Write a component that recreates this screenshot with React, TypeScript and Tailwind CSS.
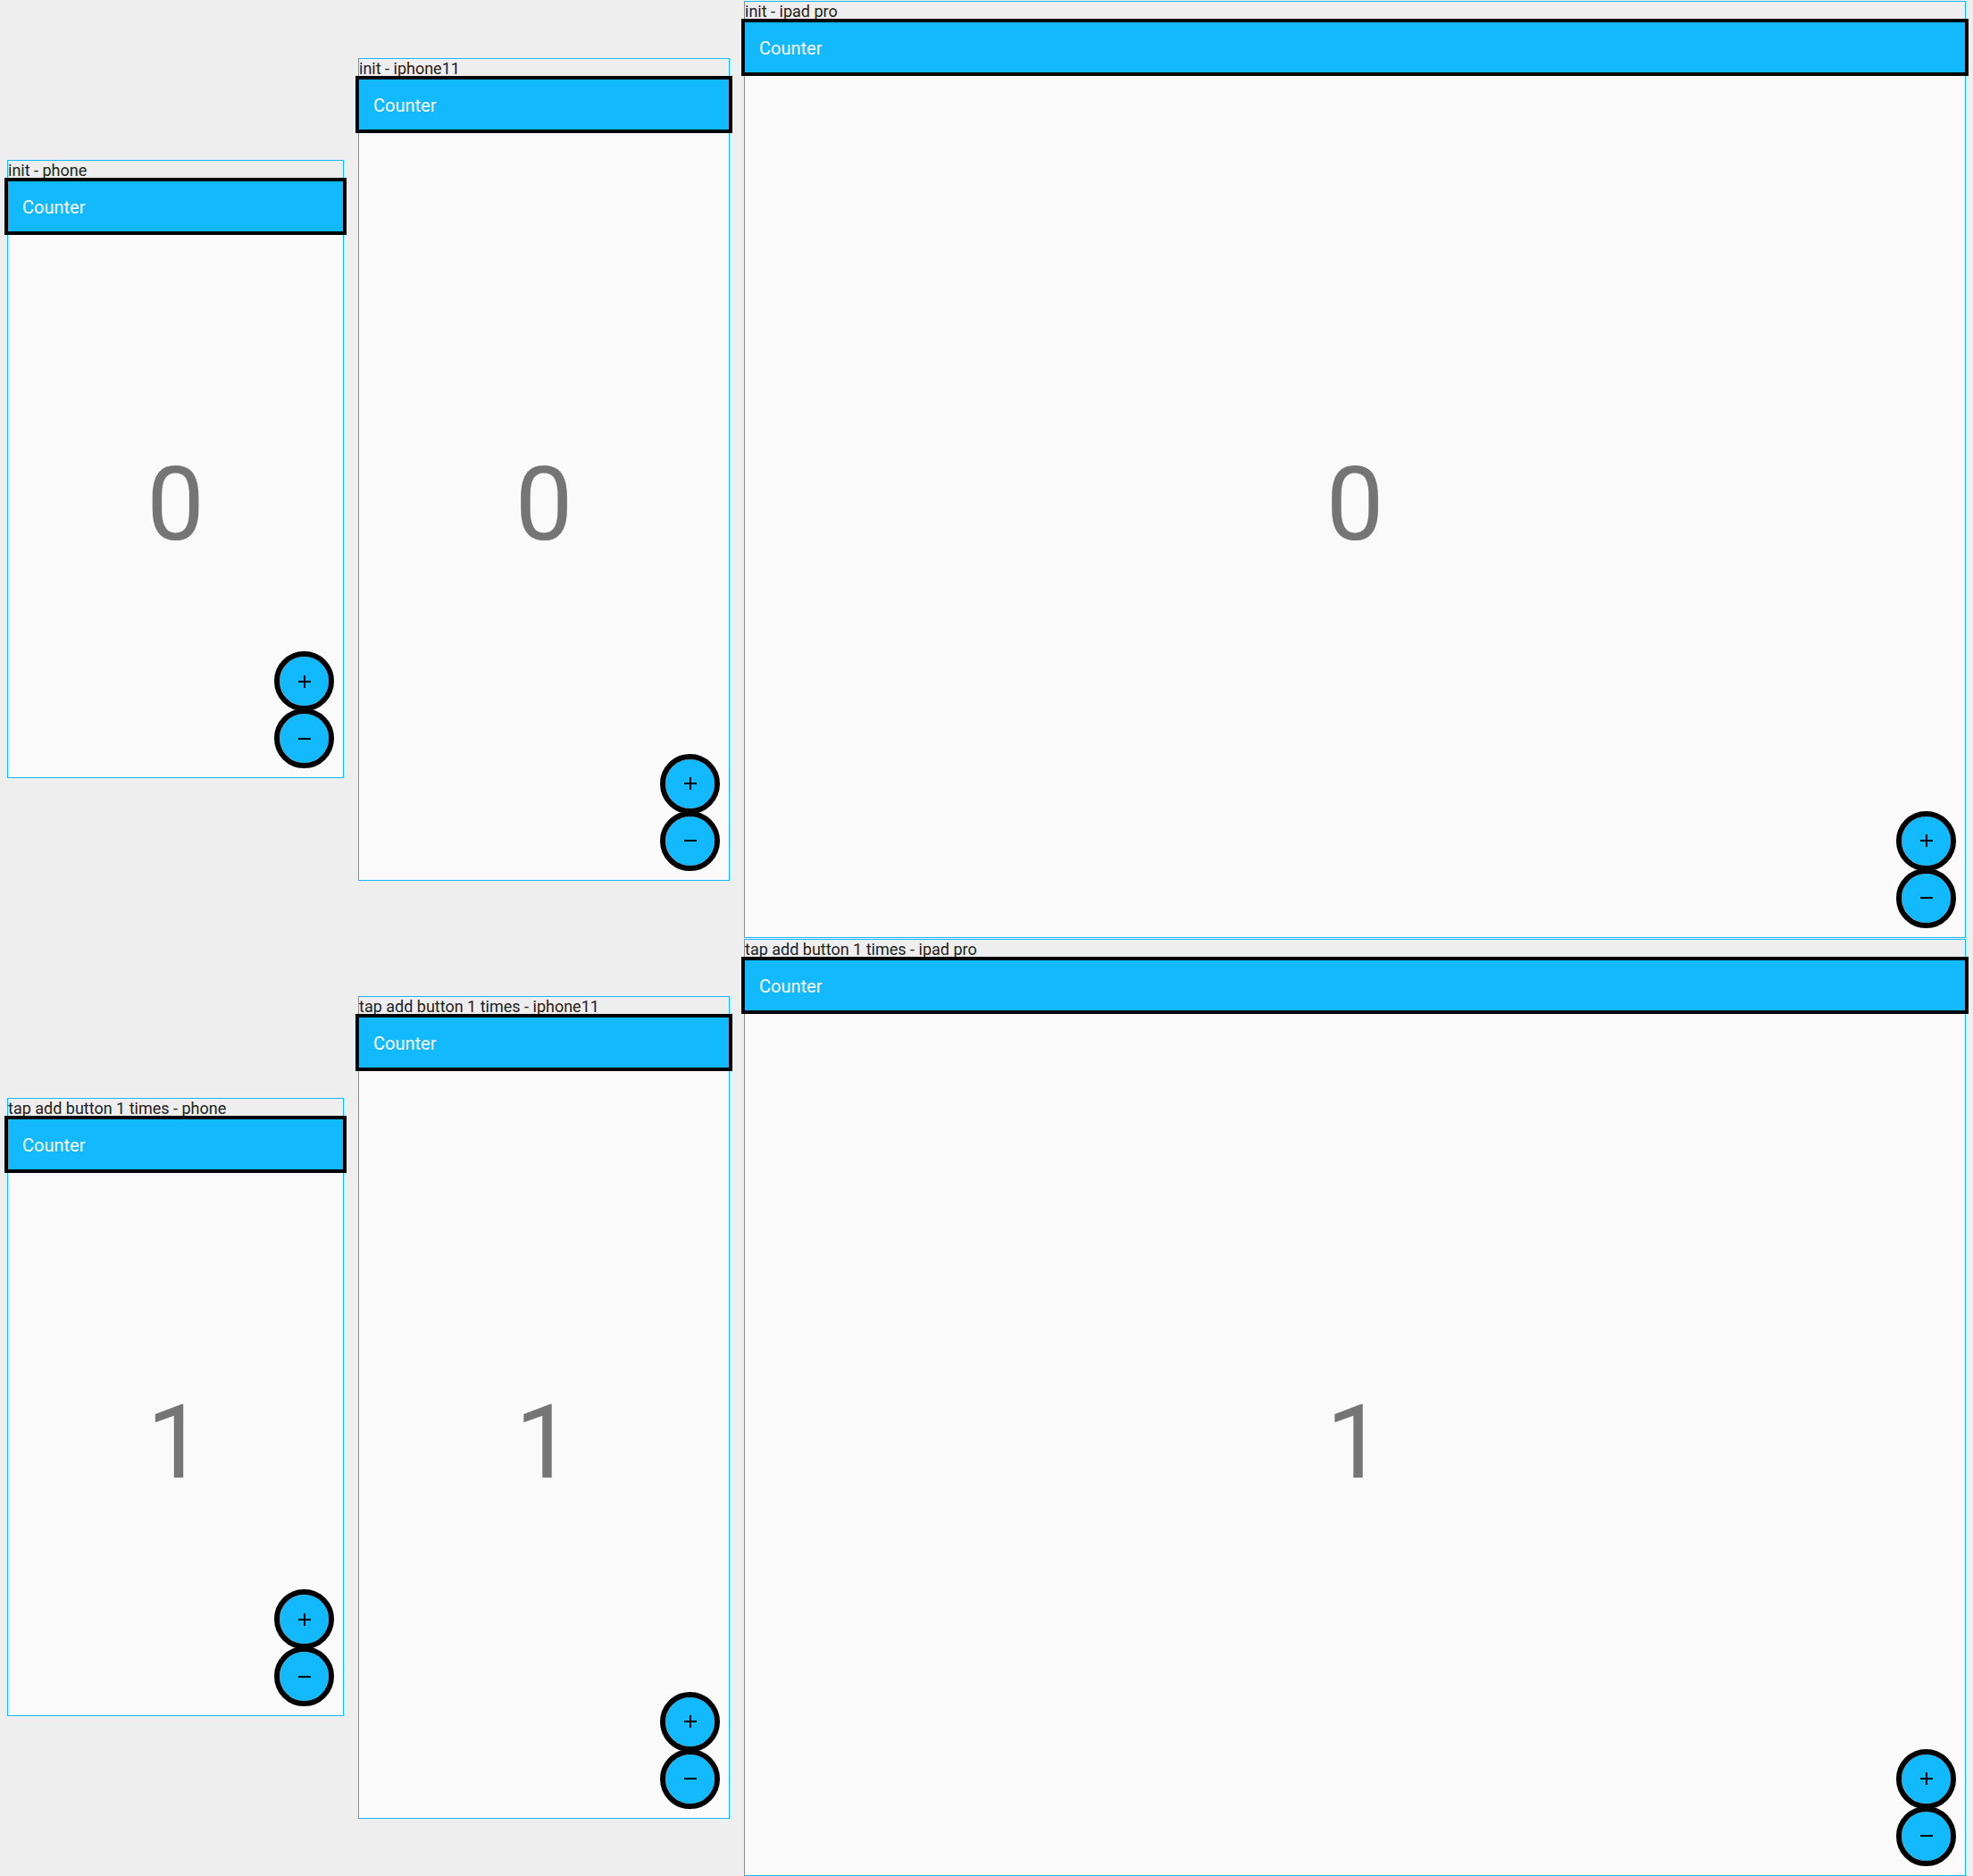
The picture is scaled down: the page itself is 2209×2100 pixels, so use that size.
import React from "react"

// Golden test grid: counter app on three devices, before and after a tap
const devices = [
  { id: "phone", name: "phone", w: "w-[375px]", h: "h-[667px]" },
  { id: "iphone11", name: "iphone11", w: "w-[414px]", h: "h-[896px]" },
  { id: "ipad", name: "ipad pro", w: "w-[1366px]", h: "h-[1024px]" },
]

const scenarios = [
  { id: "init", label: "init", count: 0 },
  { id: "tap", label: "tap add button 1 times", count: 1 },
]

const font = { fontFamily: "Roboto, 'Liberation Sans', sans-serif" }

function PlusIcon() {
  return (
    <svg viewBox="0 0 24 24" className="h-6 w-6" fill="#000">
      <path d="M19 13h-6v6h-2v-6H5v-2h6V5h2v6h6v2z" />
    </svg>
  )
}

function MinusIcon() {
  return (
    <svg viewBox="0 0 24 24" className="h-6 w-6" fill="#000">
      <path d="M19 13H5v-2h14v2z" />
    </svg>
  )
}

function Fab({ children }: { children: React.ReactNode }) {
  return (
    <button className="flex h-[55px] w-[55px] items-center justify-center rounded-full bg-[#13b9fd] outline-[6px] outline-black">
      {children}
    </button>
  )
}

function Screen({ device, count }: { device: (typeof devices)[number]; count: number }) {
  return (
    <div className={`relative flex flex-col bg-[#fafafa] ${device.w} ${device.h}`}>
      {/* App bar */}
      <div className="flex h-14 shrink-0 items-center bg-[#13b9fd] px-4 pt-[2px] text-[20px] text-white outline-4 outline-black">
        Counter
      </div>
      {/* Body */}
      <div className="flex flex-1 items-center justify-center">
        <span className="text-[115px] leading-none text-[#757575]">{count}</span>
      </div>
      {/* Floating buttons */}
      <div className="absolute right-4 bottom-4 flex flex-col gap-[9px]">
        <Fab>
          <PlusIcon />
        </Fab>
        <Fab>
          <MinusIcon />
        </Fab>
      </div>
    </div>
  )
}

export default function App() {
  return (
    <div className="flex h-[2100px] w-[2209px] flex-col overflow-hidden bg-[#eeeeee]" style={font}>
      {scenarios.map((s) => (
        <div key={s.id} className="flex h-[1050px] shrink-0 items-center gap-4 px-2">
          {devices.map((d) => (
            <div key={d.id} className="flex flex-col border border-[#13b9fd]">
              <div className="h-[23px] text-[18px] leading-[22px] whitespace-nowrap text-[#212121]">
                {s.label} - {d.name}
              </div>
              <Screen device={d} count={s.count} />
            </div>
          ))}
        </div>
      ))}
    </div>
  )
}
